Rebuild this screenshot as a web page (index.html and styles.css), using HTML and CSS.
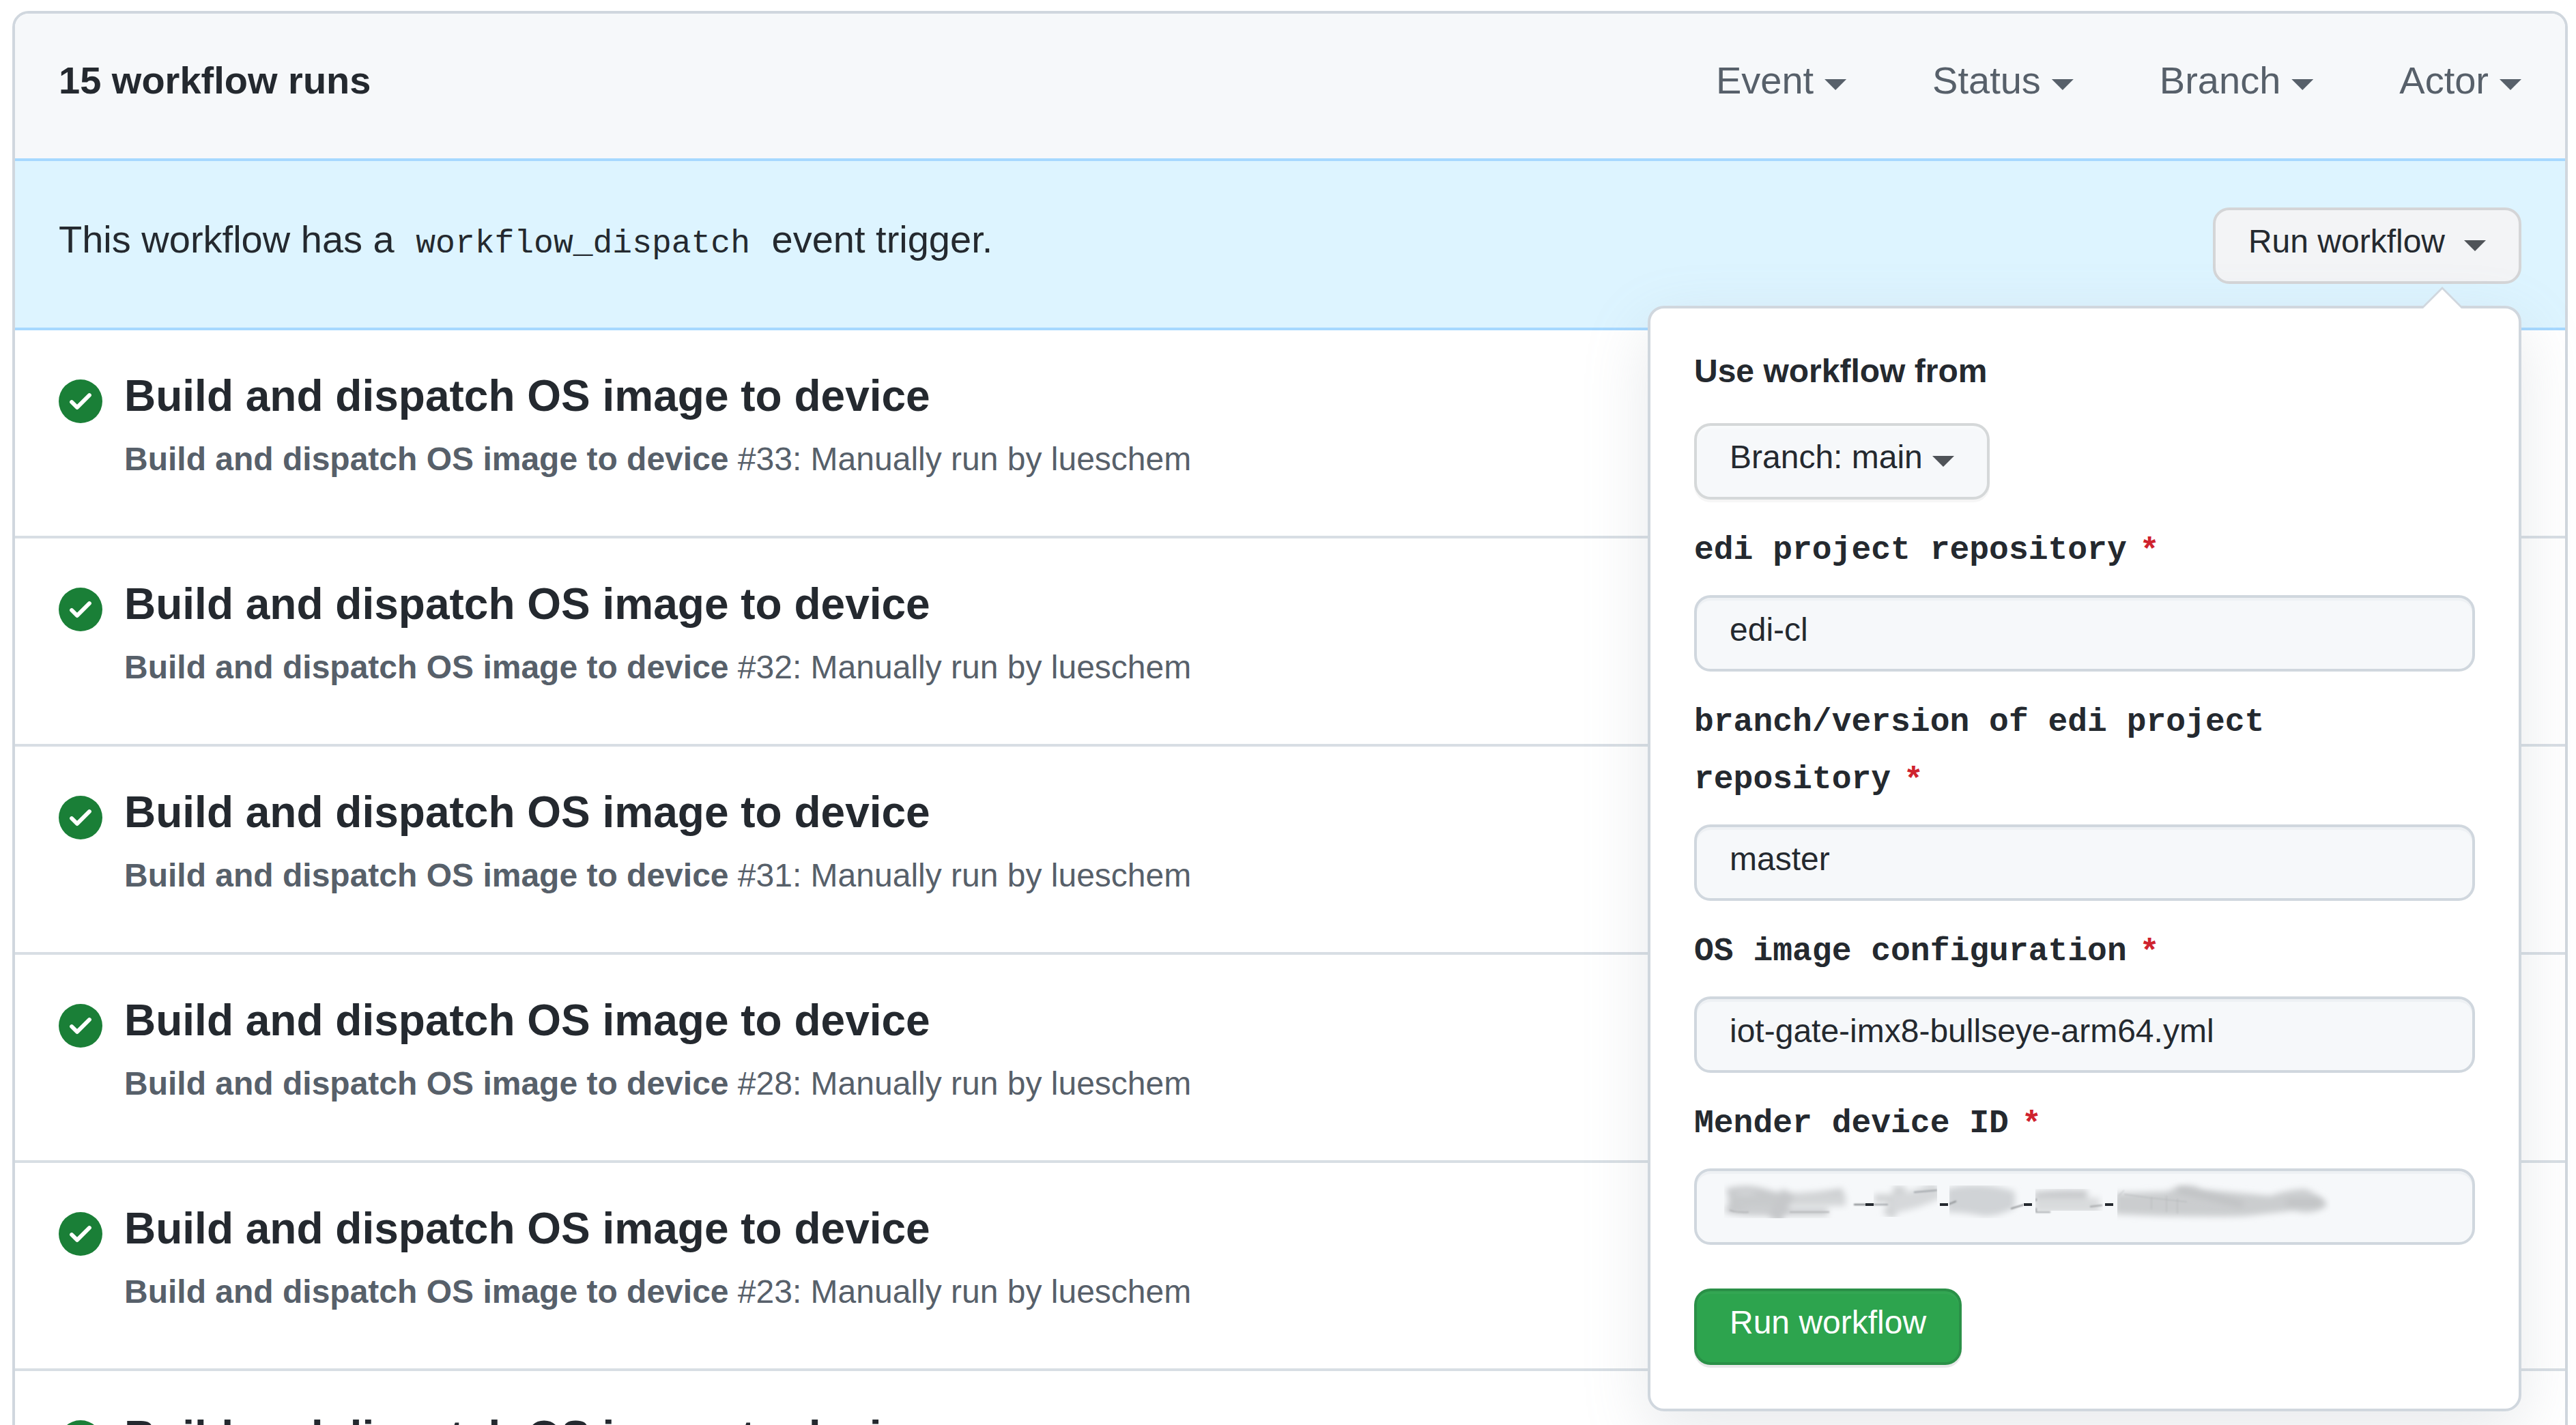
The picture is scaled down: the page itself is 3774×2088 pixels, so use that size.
FILE: index.html
```html
<!DOCTYPE html>
<html lang="en">
<head>
<meta charset="utf-8">
<meta name="viewport" content="width=device-width, initial-scale=1">
<title>Workflow runs</title>
<link rel="stylesheet" href="styles.css">
</head>
<body>
<svg class="sprite" aria-hidden="true">
  <symbol id="check-circle-fill" viewBox="0 0 16 16">
    <path fill-rule="evenodd" d="M8 16A8 8 0 108 0a8 8 0 000 16zm3.78-9.72a.75.75 0 00-1.06-1.06L6.75 9.19 5.28 7.72a.75.75 0 00-1.06 1.06l2 2a.75.75 0 001.06 0l4.5-4.5z"/>
  </symbol>
</svg>
<main class="box">
  <header class="box-header">
    <h1 class="box-title">15 workflow runs</h1>
    <nav class="filters" aria-label="Filters">
      <button class="filter" type="button" aria-haspopup="true">Event<span class="caret"></span></button>
      <button class="filter" type="button" aria-haspopup="true">Status<span class="caret"></span></button>
      <button class="filter" type="button" aria-haspopup="true">Branch<span class="caret"></span></button>
      <button class="filter" type="button" aria-haspopup="true">Actor<span class="caret"></span></button>
    </nav>
  </header>

  <section class="banner">
    <p class="banner-text">This workflow has a <code class="code">workflow_dispatch</code> event trigger.</p>
    <div class="dispatch">
      <button class="btn btn-active" type="button" aria-expanded="true">Run workflow<span class="caret caret-spaced"></span></button>
      <form class="popover">
        <label class="popover-title" for="ref">Use workflow from</label>
        <div class="select-wrap">
          <select class="btn select" id="ref"><option>Branch: main</option></select>
          <span class="caret select-caret"></span>
        </div>
        <label class="label" for="repo">edi project repository<span class="required">*</span></label>
        <input class="input" id="repo" type="text" value="edi-cl">
        <label class="label" for="version">branch/version of edi project repository<span class="required">*</span></label>
        <input class="input" id="version" type="text" value="master">
        <label class="label" for="config">OS image configuration<span class="required">*</span></label>
        <input class="input" id="config" type="text" value="iot-gate-imx8-bullseye-arm64.yml">
        <label class="label" for="device">Mender device ID<span class="required">*</span></label>
        <div class="redacted">
          <input class="input" id="device" type="text">
          <svg class="smudge" viewBox="0 0 950 100" aria-hidden="true">
            <defs>
              <filter id="soft" x="-20%" y="-50%" width="140%" height="200%"><feGaussianBlur stdDeviation="5"/></filter>
              <filter id="fine" x="-20%" y="-100%" width="140%" height="300%"><feGaussianBlur stdDeviation="1"/></filter>
              <clipPath id="c1"><path d="M26 10h207v55H26z"/></clipPath>
              <clipPath id="c2"><path d="M245 17h93v46h-93z"/></clipPath>
              <clipPath id="c3"><path d="M356 17h108v48H356z"/></clipPath>
              <clipPath id="c4"><path d="M482 14h99v51h-99z"/></clipPath>
              <clipPath id="c5"><path d="M602 8h312v64H602z"/></clipPath>
            </defs>
            <g clip-path="url(#c1)">
              <g filter="url(#soft)" fill="none" stroke="#c6c8ca">
                <path stroke-width="9" d="M30 26q30-8 60 2t110-2"/>
                <path stroke-width="22" stroke="#c8cacc" d="M32 40h78"/>
                <path stroke-width="18" stroke="#d3d5d7" d="M110 38h94"/>
                <path stroke-width="20" d="M120 26q-10 22-20 42"/>
                <path stroke-width="9" d="M28 52q20 6 70 4h80"/>
              </g>
              <g filter="url(#fine)" fill="none" stroke="#b4b6b8" stroke-width="2">
                <path d="M34 53q10 4 28 3M122 56h58"/>
                <path stroke="#707478" d="M216 45h18"/>
              </g>
            </g>
            <g clip-path="url(#c2)">
              <g filter="url(#soft)" fill="none" stroke="#cfd1d3">
                <path stroke-width="18" d="M284 18q-4 24-18 44"/>
                <path stroke-width="26" stroke="#d6d8da" d="M270 44q38-4 70-22"/>
                <path stroke-width="12" d="M246 36h26"/>
              </g>
              <path filter="url(#fine)" fill="none" stroke="#9da1a6" stroke-width="2" d="M244 45h22M304 27l34-3"/>
            </g>
            <g clip-path="url(#c3)">
              <path filter="url(#soft)" fill="#d0d3d6" d="M352 22q46-14 100 4v24q-24 12-44 12-30-6-56-6z"/>
              <path filter="url(#fine)" fill="none" stroke="#8c8f92" stroke-width="2" d="M354 45l12-5M446 51l20-6"/>
            </g>
            <g clip-path="url(#c4)">
              <g filter="url(#soft)" fill="none" stroke="#c6c8ca">
                <path stroke-width="14" d="M480 34q30-5 78-3"/>
                <path stroke-width="22" stroke="#d9dbdd" d="M480 46h96"/>
              </g>
              <path filter="url(#fine)" fill="none" stroke="#a0a3a6" stroke-width="2" d="M483 36v4M483 50v7M484 56h20M562 48l18-2"/>
            </g>
            <g clip-path="url(#c5)">
              <path filter="url(#soft)" fill="#cbcdcf" d="M598 28l76-2q32-16 52-3l100 9q30-10 52-10 30 14 32 24-20 16-50 8l-72 8q-90 2-190-3z"/>
              <path filter="url(#soft)" fill="none" stroke="#bfc1c3" stroke-width="8" d="M690 23l96 22M850 42h50"/>
              <path filter="url(#fine)" fill="none" stroke="#b6b9bb" stroke-width="1" d="M604 32l8-8M612 30l36 5 56 6M652 34v18M674 32v24M690 36v22"/>
            </g>
            <path fill="#24292f" d="M233 43h12v4h-12zM342 43h12v4h-12zM465 43h12v4h-12zM584 43h12v4h-12z"/>
          </svg>
        </div>
        <button class="btn btn-primary" type="submit">Run workflow</button>
      </form>
    </div>
  </section>

  <article class="run">
    <svg class="run-icon" role="img" aria-label="Completed successfully"><use href="#check-circle-fill"/></svg>
    <div class="run-body">
      <a class="run-title" href="#33">Build and dispatch OS image to device</a>
      <p class="run-meta"><b>Build and dispatch OS image to device</b> #33: Manually run by lueschem</p>
    </div>
  </article>
  <article class="run">
    <svg class="run-icon" role="img" aria-label="Completed successfully"><use href="#check-circle-fill"/></svg>
    <div class="run-body">
      <a class="run-title" href="#32">Build and dispatch OS image to device</a>
      <p class="run-meta"><b>Build and dispatch OS image to device</b> #32: Manually run by lueschem</p>
    </div>
  </article>
  <article class="run">
    <svg class="run-icon" role="img" aria-label="Completed successfully"><use href="#check-circle-fill"/></svg>
    <div class="run-body">
      <a class="run-title" href="#31">Build and dispatch OS image to device</a>
      <p class="run-meta"><b>Build and dispatch OS image to device</b> #31: Manually run by lueschem</p>
    </div>
  </article>
  <article class="run">
    <svg class="run-icon" role="img" aria-label="Completed successfully"><use href="#check-circle-fill"/></svg>
    <div class="run-body">
      <a class="run-title" href="#28">Build and dispatch OS image to device</a>
      <p class="run-meta"><b>Build and dispatch OS image to device</b> #28: Manually run by lueschem</p>
    </div>
  </article>
  <article class="run">
    <svg class="run-icon" role="img" aria-label="Completed successfully"><use href="#check-circle-fill"/></svg>
    <div class="run-body">
      <a class="run-title" href="#23">Build and dispatch OS image to device</a>
      <p class="run-meta"><b>Build and dispatch OS image to device</b> #23: Manually run by lueschem</p>
    </div>
  </article>
  <article class="run">
    <svg class="run-icon" role="img" aria-label="Completed successfully"><use href="#check-circle-fill"/></svg>
    <div class="run-body">
      <a class="run-title" href="#runs">Build and dispatch OS image to device</a>
    </div>
  </article>
</main>
</body>
</html>
```
FILE: styles.css
```css
* {
  box-sizing: border-box;
}

body {
  margin: 0;
  padding: 16px 12px 0 18px;
  height: 100vh;
  overflow: hidden;
  background: #fff;
  color: #24292f;
  font-family: "Liberation Sans", Arial, sans-serif;
  font-size: 48px;
  line-height: 72px;
}

h1,
p {
  margin: 0;
}

button,
input,
select {
  font: inherit;
  color: inherit;
}

.sprite {
  display: none;
}

.box {
  border: 4px solid #d0d7de;
  border-radius: 24px;
}

/* Header */
.box-header {
  display: flex;
  justify-content: space-between;
  padding: 56px 64px 72px;
  border-radius: 20px 20px 0 0;
  background: #f6f8fa;
  font-size: 56px;
  line-height: 84px;
}

.box-title {
  font-size: 56px;
  font-weight: 700;
}

.filters {
  display: flex;
  gap: 126px;
}

.filter {
  display: flex;
  align-items: center;
  gap: 16px;
  padding: 0;
  border: 0;
  background: none;
  color: #57606a;
}

.caret {
  width: 32px;
  height: 16px;
  margin-top: 12px;
  background: currentColor;
  clip-path: polygon(0 0, 100% 0, 50% 100%);
}

/* Dispatch banner */
.banner {
  display: flex;
  align-items: baseline;
  justify-content: space-between;
  padding: 68px 64px 64px;
  border: solid #a6d8ff;
  border-width: 4px 0;
  background: #ddf4ff;
}

.banner-text {
  font-size: 56px;
  line-height: 84px;
}

.code {
  padding: 0 16px;
  font-family: "Liberation Mono", "Courier New", monospace;
  font-size: 48px;
  line-height: 72px;
}

.dispatch {
  position: relative;
}

.btn {
  display: flex;
  align-items: center;
  padding: 10px 48px 22px;
  border: 4px solid rgba(27, 31, 36, 0.15);
  border-radius: 24px;
  background: #f6f8fa;
  line-height: 72px;
  box-shadow: 0 4px 0 rgba(27, 31, 36, 0.04), inset 0 4px 0 rgba(255, 255, 255, 0.25);
}

.btn-active {
  border-color: #d4d5d7;
  background: #f3f4f6;
  box-shadow: none;
}

.btn .caret {
  background: #4f5358;
}

.caret-spaced {
  margin-left: 28px;
}

.btn-primary {
  margin-top: 64px;
  background: #2da44e;
  color: #fff;
  box-shadow: 0 4px 0 rgba(27, 31, 36, 0.1), inset 0 4px 0 rgba(255, 255, 255, 0.03);
}

/* Dispatch form */
.popover {
  position: absolute;
  z-index: 1;
  top: calc(100% + 32px);
  right: 0;
  width: 1280px;
  padding: 56px 64px 64px;
  border: 4px solid #d0d7de;
  border-radius: 24px;
  background: #fff;
  box-shadow: 0 32px 96px rgba(140, 149, 159, 0.2);
}

.popover::before,
.popover::after {
  content: "";
  position: absolute;
  clip-path: polygon(0 100%, 50% 0, 100% 100%);
}

.popover::before {
  right: 80px;
  bottom: 100%;
  width: 64px;
  height: 32px;
  background: #d0d7de;
}

.popover::after {
  top: -28px;
  right: 84px;
  width: 56px;
  height: 28px;
  background: #fff;
}

.popover-title {
  display: block;
  margin-bottom: 40px;
  font-weight: 700;
}

.select-wrap {
  position: relative;
  width: fit-content;
}

.select {
  display: block;
  padding-right: 94px;
  appearance: none;
}

.select-caret {
  position: absolute;
  top: 36px;
  right: 52px;
  background: #4f5358;
  pointer-events: none;
}

.label {
  display: block;
  margin: 32px 0 24px;
  font-family: "Liberation Mono", "Courier New", monospace;
  font-weight: 700;
  line-height: 84px;
}

.required {
  margin-left: 24px;
  color: #cf222e;
  font-family: "Liberation Sans", Arial, sans-serif;
  line-height: 48px;
}

.input {
  display: block;
  width: 100%;
  height: 112px;
  padding: 10px 48px 22px;
  border: 4px solid #d0d7de;
  border-radius: 24px;
  background: #f6f8fa;
  box-shadow: inset 0 4px 0 rgba(208, 215, 222, 0.2);
}

.redacted {
  position: relative;
}

.smudge {
  position: absolute;
  top: 8px;
  left: 18px;
  width: 950px;
  height: 100px;
  pointer-events: none;
}

/* Run rows */
.run {
  display: flex;
  gap: 32px;
  padding: 56px 64px 76px;
}

.run + .run {
  border-top: 4px solid #d8dee4;
}

.run-icon {
  flex: none;
  width: 64px;
  height: 64px;
  margin-top: 16px;
  fill: #1a7f37;
}

.run-title {
  display: block;
  margin-bottom: 17px;
  color: inherit;
  font-size: 64px;
  font-weight: 700;
  line-height: 80px;
  text-decoration: none;
}

.run-meta {
  color: #57606a;
}
```
